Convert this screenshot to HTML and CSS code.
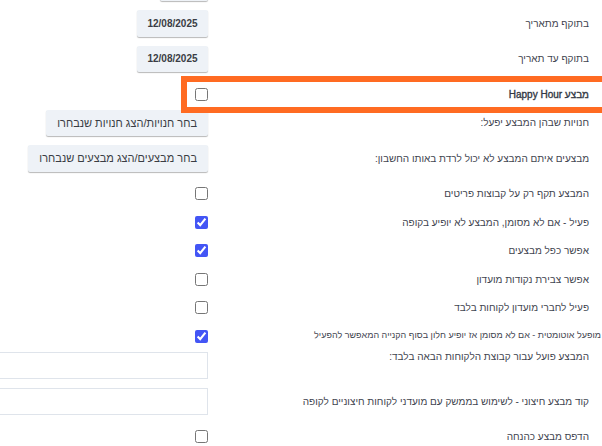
FILE: index.html
```html
<!DOCTYPE html>
<html lang="he" dir="rtl">
<head>
<meta charset="utf-8">
<title>מבצע</title>
<link rel="stylesheet" href="styles.css">
</head>
<body>
<div class="form">
  <div class="row row-btn">
    <div class="label"></div>
    <div class="ctrl"><button class="btn btn-small"></button></div>
  </div>
  <div class="row row-btn">
    <div class="label">בתוקף מתאריך</div>
    <div class="ctrl"><button class="btn btn-date">12/08/2025</button></div>
  </div>
  <div class="row row-btn">
    <div class="label">בתוקף עד תאריך</div>
    <div class="ctrl"><button class="btn btn-date">12/08/2025</button></div>
  </div>
  <div class="row row-cb">
    <div class="label label-strong">מבצע Happy Hour</div>
    <div class="ctrl"><input type="checkbox" class="cb"></div>
  </div>
  <div class="row row-btn">
    <div class="label">חנויות שבהן המבצע יפעל:</div>
    <div class="ctrl"><button class="btn">בחר חנויות/הצג חנויות שנבחרו</button></div>
  </div>
  <div class="row row-btn">
    <div class="label">מבצעים איתם המבצע לא יכול לרדת באותו החשבון:</div>
    <div class="ctrl"><button class="btn">בחר מבצעים/הצג מבצעים שנבחרו</button></div>
  </div>
  <div class="row row-cb">
    <div class="label">המבצע תקף רק על קבוצות פריטים</div>
    <div class="ctrl"><input type="checkbox" class="cb"></div>
  </div>
  <div class="row row-cb">
    <div class="label">פעיל - אם לא מסומן, המבצע לא יופיע בקופה</div>
    <div class="ctrl"><input type="checkbox" class="cb" checked></div>
  </div>
  <div class="row row-cb">
    <div class="label">אפשר כפל מבצעים</div>
    <div class="ctrl"><input type="checkbox" class="cb" checked></div>
  </div>
  <div class="row row-cb">
    <div class="label">אפשר צבירת נקודות מועדון</div>
    <div class="ctrl"><input type="checkbox" class="cb"></div>
  </div>
  <div class="row row-cb">
    <div class="label">פעיל לחברי מועדון לקוחות בלבד</div>
    <div class="ctrl"><input type="checkbox" class="cb"></div>
  </div>
  <div class="row row-cb">
    <div class="label label-wide">מופעל אוטומטית - אם לא מסומן אז יופיע חלון בסוף הקנייה המאפשר להפעיל</div>
    <div class="ctrl"><input type="checkbox" class="cb" checked></div>
  </div>
  <div class="row row-input">
    <div class="label label-top">המבצע פועל עבור קבוצת הלקוחות הבאה בלבד:</div>
    <div class="ctrl"><input type="text" class="field"></div>
  </div>
  <div class="row row-input">
    <div class="label">קוד מבצע חיצוני - לשימוש בממשק עם מועדני לקוחות חיצוניים לקופה</div>
    <div class="ctrl"><input type="text" class="field"></div>
  </div>
  <div class="row row-cb">
    <div class="label">הדפס מבצע כהנחה</div>
    <div class="ctrl"><input type="checkbox" class="cb"></div>
  </div>
</div>
<div class="highlight"></div>
</body>
</html>
```

FILE: styles.css
```css
html, body {
  margin: 0;
  padding: 0;
  background: #ffffff;
  overflow: hidden;
}

body {
  direction: rtl;
  font-family: "Liberation Sans", Arial, sans-serif;
  font-size: 10px;
  color: #3f4550;
  width: 602px;
  height: 446px;
  position: relative;
}

.form {
  display: flex;
  flex-direction: column;
  gap: 9px;
  padding-right: 13px;
  margin-top: -25.5px;
}

.row {
  display: grid;
  grid-template-columns: 381px 1fr;
}

.row-btn { height: 26.5px; }
.row-cb { height: 19.5px; }
.row-input { height: 27px; }

.label {
  white-space: nowrap;
  line-height: 13px;
  align-self: center;
}

.row-cb .label { align-self: end; }
.label-top { align-self: start; margin-top: -2px; }
.label-strong {
  color: #323844;
  -webkit-text-stroke: 0.35px #323844;
}
.label-wide {
  font-size: 9px;
  margin-right: -12px;
  margin-bottom: 1px;
}

.ctrl {
  display: flex;
  justify-content: flex-start;
  align-items: center;
}

.row-cb .ctrl { align-items: flex-end; }

.btn {
  height: 26.5px;
  margin: 0;
  padding: 0 11px;
  border: none;
  border-radius: 2px;
  background: #eef2f7;
  box-shadow: 0 1px 1px rgba(0, 0, 0, 0.28);
  font-family: "Liberation Sans", Arial, sans-serif;
  font-size: 11px;
  color: #3a3d44;
  white-space: nowrap;
}

.btn-date {
  font-size: 10px;
  font-weight: bold;
  width: 71px;
  padding: 0;
}

.btn-small { width: 48px; }

.cb {
  width: 13px;
  height: 13px;
  margin: 0;
  accent-color: #4355f5;
}

.field {
  width: 240px;
  height: 27px;
  box-sizing: border-box;
  margin: 0;
  border: 1px solid #dfe4eb;
  border-radius: 0;
  background: #ffffff;
  flex-shrink: 0;
}

.highlight {
  position: absolute;
  left: 181px;
  top: 76px;
  width: 430px;
  height: 37px;
  box-sizing: border-box;
  border: 6px solid #ff6b22;
  pointer-events: none;
}
```
